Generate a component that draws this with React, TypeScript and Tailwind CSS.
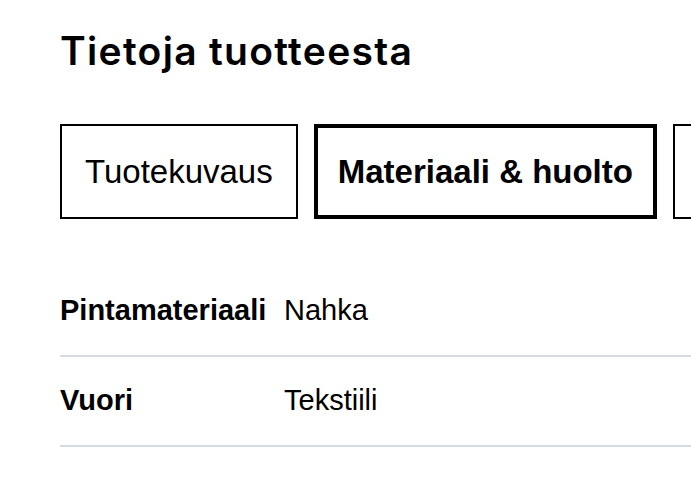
import React from "react";

export default function App() {
  const rows = [
    { label: "Pintamateriaali", value: "Nahka" },
    { label: "Vuori", value: "Tekstiili" },
  ];
  return (
    <div className="min-h-screen w-full overflow-hidden bg-white text-black">
      <div className="pl-[60px]">
        <h2
          className="pt-[27px] text-[39px] leading-[48px] font-semibold tracking-[1.3px]"
          style={{ fontFamily: "Inter, 'Noto Sans', sans-serif" }}
        >
          Tietoja tuotteesta
        </h2>
        <div
          className="mt-[49px] flex gap-[16px] whitespace-nowrap"
          style={{ fontFamily: "'Liberation Sans', Arial, sans-serif" }}
        >
          <div className="flex h-[95px] shrink-0 items-center border-2 border-black px-[23px] text-[33px]">
            Tuotekuvaus
          </div>
          <div className="flex h-[95px] shrink-0 items-center border-4 border-black px-[20px] text-[33px] font-bold">
            Materiaali &amp; huolto
          </div>
          <div className="flex h-[95px] w-[200px] shrink-0 items-center border-2 border-black"></div>
        </div>
        <div
          className="mt-[48px]"
          style={{ fontFamily: "'Liberation Sans', Arial, sans-serif" }}
        >
          {rows.map((r) => (
            <div key={r.label} className="border-b-2 border-[#d5dbe0]">
              <div className="grid h-[88px] grid-cols-[224px_1fr] items-center text-[29px]">
                <span className="font-bold">{r.label}</span>
                <span>{r.value}</span>
              </div>
            </div>
          ))}
        </div>
      </div>
    </div>
  );
}
